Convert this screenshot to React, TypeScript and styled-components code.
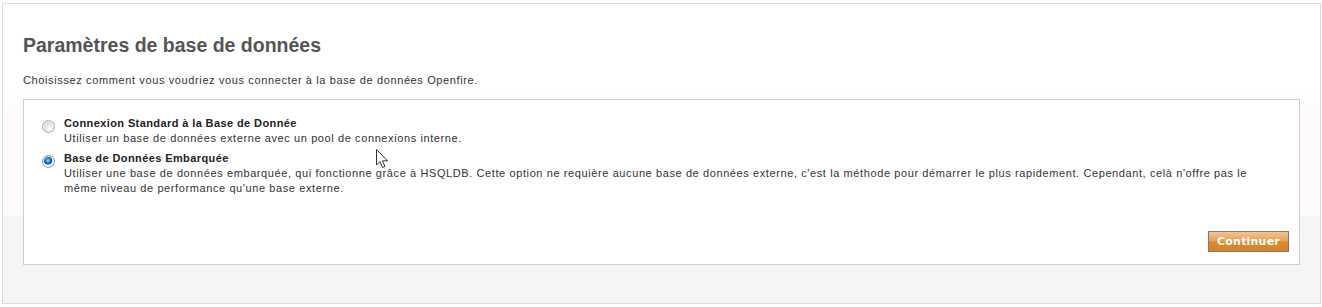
import React from "react";
import styled, { createGlobalStyle } from "styled-components";

const GlobalStyle = createGlobalStyle`
  html, body { margin: 0; padding: 0; background: #ffffff; }
  body { font-family: "Liberation Sans", Arial, sans-serif; }
`;

const Page = styled.div`
  position: relative;
  padding: 3px 0 0 2px;
  width: 1322px;
  height: 307px;
  box-sizing: border-box;
`;

const Frame = styled.div`
  box-sizing: border-box;
  width: 1319px;
  height: 301px;
  border: 1px solid #dcdcdc;
  padding: 30px 20px 0 20px;
  background: linear-gradient(
    to bottom,
    #ffffff 0px,
    #ffffff 88px,
    #fdf9fd 112px,
    #fdf9fd 212px,
    #f5f5f5 212px,
    #f5f5f5 100%
  );
`;

const Title = styled.h1`
  margin: 0;
  font-size: 19.5px;
  line-height: 22px;
  font-weight: bold;
  color: #555555;
`;

const Intro = styled.p`
  margin: 17px 0 0 0;
  font-size: 11px;
  line-height: 14px;
  letter-spacing: 0.62px;
  color: #333333;
`;

const Panel = styled.div`
  box-sizing: border-box;
  margin-top: 12px;
  width: 1277px;
  height: 166px;
  border: 1px solid #cfcfcf;
  background: #ffffff;
  display: flex;
  flex-direction: column;
  padding: 16px 10px 12px 18px;
`;

const OptionList = styled.div`
  display: flex;
  flex-direction: column;
  gap: 5px;
  padding-right: 22px;
`;

const Option = styled.label`
  display: grid;
  grid-template-columns: 13px 1fr;
  column-gap: 9px;
  align-items: start;
  cursor: default;
`;

const Radio = styled.span<{ $checked?: boolean }>`
  display: block;
  width: 13px;
  height: 13px;
  box-sizing: border-box;
  margin-top: 4px;
  border-radius: 50%;
  border: 1px solid ${(p) => (p.$checked ? "#8a9aa8" : "#a9a9a9")};
  background: ${(p) =>
    p.$checked
      ? "radial-gradient(circle at 45% 40%, #bfe6ff 0px, #3f9fe6 1.5px, #0e5fae 3.2px, #0a3f78 3.9px, #e2e6ea 4.4px, #ffffff 6px)"
      : "radial-gradient(circle at 60% 65%, #ffffff 0px, #f2f2f2 2px, #d6d6d6 6px)"};
  box-shadow: inset 0 0 0 1px ${(p) => (p.$checked ? "#f4f6f8" : "#f6f6f6")};
`;

const OptionText = styled.span`
  display: flex;
  flex-direction: column;
  font-size: 11px;
  line-height: 15px;
  letter-spacing: 0.6px;
  color: #333333;
`;

const OptionLabel = styled.strong`
  font-weight: bold;
  letter-spacing: 0.4px;
  color: #222222;
`;

const Footer = styled.div`
  margin-top: auto;
  display: flex;
  justify-content: flex-end;
`;

const Button = styled.button`
  box-sizing: border-box;
  width: 81px;
  height: 21px;
  padding: 0;
  border: 1px solid #7a7a7a;
  background: linear-gradient(to bottom, #f2c58f 0%, #e6a257 45%, #d98a2b 55%, #d6852a 100%);
  color: #ffffff;
  font-family: "DejaVu Sans", Verdana, sans-serif;
  font-size: 11px;
  font-weight: bold;
  letter-spacing: 0.2px;
  cursor: pointer;
`;

const Cursor = styled.svg`
  position: absolute;
  left: 376px;
  top: 149px;
  pointer-events: none;
`;

export default function App() {
  return (
    <>
      <GlobalStyle />
      <Page>
        <Frame>
          <Title>Paramètres de base de données</Title>
          <Intro>Choisissez comment vous voudriez vous connecter à la base de données Openfire.</Intro>
          <Panel>
            <OptionList>
              <Option>
                <Radio />
                <OptionText>
                  <OptionLabel>Connexion Standard à la Base de Donnée</OptionLabel>
                  <span>Utiliser un base de données externe avec un pool de connexions interne.</span>
                </OptionText>
              </Option>
              <Option>
                <Radio $checked />
                <OptionText>
                  <OptionLabel>Base de Données Embarquée</OptionLabel>
                  <span>
                    Utiliser une base de données embarquée, qui fonctionne grâce à HSQLDB. Cette option ne requière aucune base de données externe, c'est la méthode pour démarrer le plus rapidement. Cependant, celà n'offre pas le même niveau de performance qu'une base externe.
                  </span>
                </OptionText>
              </Option>
            </OptionList>
            <Footer>
              <Button type="button">Continuer</Button>
            </Footer>
          </Panel>
        </Frame>
        <Cursor width="13" height="20" viewBox="0 0 13 20">
          <path d="M0.5 0.5 L0.5 16 L4 12.5 L6.5 18.5 L9 17.5 L6.5 11.8 L11.5 11.8 Z" fill="#ffffff" stroke="#333333" strokeWidth="1" strokeLinejoin="miter" />
        </Cursor>
      </Page>
    </>
  );
}
